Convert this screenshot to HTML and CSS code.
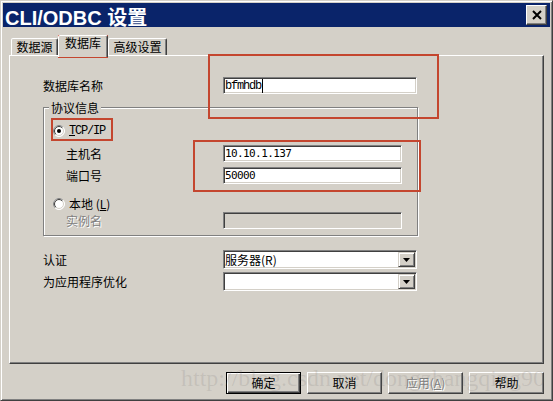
FILE: index.html
```html
<!DOCTYPE html>
<html lang="zh">
<head>
<meta charset="utf-8">
<title>CLI/ODBC 设置</title>
<link rel="stylesheet" href="styles.css">
</head>
<body>
<div class="window">
  <div class="titlebar">
    <span class="title">CLI/ODBC 设置</span>
    <span class="close"><svg width="10" height="10" viewBox="0 0 10 10"><path d="M1 1L9 9M9 1L1 9" stroke="#000" stroke-width="2"/></svg></span>
  </div>
  <div class="client">
    <div class="tabs">
      <div class="tab t1">数据源</div>
      <div class="tab t2 active">数据库</div>
      <div class="tab t3">高级设置</div>
    </div>
    <div class="panel">
      <div class="row">
        <span class="lbl">数据库名称</span>
        <div class="field"><span class="mono caret">bfmhdb</span></div>
      </div>
      <fieldset class="group">
        <legend>协议信息</legend>
        <div class="grow r-tcp">
          <span class="opt"><svg class="radio" width="12" height="12" viewBox="0 0 12 12"><circle cx="6" cy="6" r="5.5" fill="#fff" stroke="#fff"/><path d="M2.1 9.9A5.5 5.5 0 0 1 9.9 2.1" fill="none" stroke="#808080"/><circle cx="6" cy="6" r="4.5" fill="#fff" stroke="#d4d0c8"/><path d="M2.8 9.2A4.5 4.5 0 0 1 9.2 2.8" fill="none" stroke="#404040"/><circle cx="6" cy="6" r="2" fill="#000"/></svg><span class="mono"><u>T</u>CP/IP</span></span>
        </div>
        <div class="grow r-host">
          <span class="sub">主机名</span>
          <div class="field"><span class="num">10.10.1.137</span></div>
        </div>
        <div class="grow r-port">
          <span class="sub">端口号</span>
          <div class="field"><span class="num">50000</span></div>
        </div>
        <div class="grow r-local">
          <span class="opt"><svg class="radio" width="12" height="12" viewBox="0 0 12 12"><circle cx="6" cy="6" r="5.5" fill="#fff" stroke="#fff"/><path d="M2.1 9.9A5.5 5.5 0 0 1 9.9 2.1" fill="none" stroke="#808080"/><circle cx="6" cy="6" r="4.5" fill="#fff" stroke="#d4d0c8"/><path d="M2.8 9.2A4.5 4.5 0 0 1 9.2 2.8" fill="none" stroke="#404040"/></svg><span>本地 (<u>L</u>)</span></span>
        </div>
        <div class="grow r-inst">
          <span class="sub disabled">实例名</span>
          <div class="field off"></div>
        </div>
      </fieldset>
      <div class="row combo-row r-auth">
        <span class="lbl">认证</span>
        <div class="combo"><span class="ctext">服务器(R)</span><span class="cbtn"><svg width="7" height="4" viewBox="0 0 7 4"><path d="M0 0H7L3.5 4Z" fill="#000"/></svg></span></div>
      </div>
      <div class="row combo-row r-opt">
        <span class="lbl">为应用程序优化</span>
        <div class="combo"><span class="ctext"></span><span class="cbtn"><svg width="7" height="4" viewBox="0 0 7 4"><path d="M0 0H7L3.5 4Z" fill="#000"/></svg></span></div>
      </div>
    </div>
    <div class="buttons">
      <div class="btn default"><span class="btn-in">确定</span></div>
      <div class="btn">取消</div>
      <div class="btn"><span class="disabled">应用(<u>A</u>)</span></div>
      <div class="btn">帮助</div>
    </div>
  </div>
  <div class="anno anno-tab"></div>
  <div class="anno anno-db"></div>
  <div class="anno anno-tcp"></div>
  <div class="anno anno-net"></div>
  <div class="watermark">http://blog.csdn.net/dongzhangqing90</div>
</div>
</body>
</html>
```

FILE: styles.css
```css
* { box-sizing: border-box; }
html, body { margin: 0; padding: 0; background: #d4d0c8; }
body {
  font-family: "Noto Sans CJK SC", "Liberation Sans", sans-serif;
  font-size: 12px;
  color: #000;
}
.window {
  position: relative;
  width: 553px;
  height: 401px;
  background: #d4d0c8;
  border: 1px solid;
  border-color: #d4d0c8 #404040 #404040 #d4d0c8;
  box-shadow: inset 1px 1px 0 #fff, inset -1px -1px 0 #808080;
  padding: 2px;
  overflow: hidden;
}
.titlebar {
  height: 24px;
  background: #0a246a;
  display: flex;
  justify-content: space-between;
  align-items: flex-start;
}
.title {
  color: #fff;
  font-family: "Liberation Sans", "Noto Sans CJK SC", sans-serif;
  font-weight: bold;
  font-size: 20px;
  line-height: 20px;
  padding: 5px 0 0 2px;
  white-space: nowrap;
}
.close {
  margin: 2px 3px 0 0;
  width: 21px;
  height: 20px;
  background: #d4d0c8;
  border: 1px solid;
  border-color: #fff #404040 #404040 #fff;
  box-shadow: inset -1px -1px 0 #808080;
  display: flex;
  align-items: center;
  justify-content: center;
}
.client { padding: 0 6px; }
.tabs {
  position: relative;
  z-index: 1;
  display: flex;
  align-items: flex-end;
  height: 20px;
  margin-top: 8px;
  padding-left: 2px;
}
.tab {
  height: 17px;
  border: 1px solid;
  border-bottom: none;
  border-color: #fff #404040 transparent #fff;
  border-radius: 2px 2px 0 0;
  box-shadow: inset -1px 0 0 #808080;
  background: #d4d0c8;
  text-align: center;
  line-height: 14px;
  padding-top: 1px;
  white-space: nowrap;
}
.t1 { width: 47px; }
.t2 { width: 50px; }
.t3 { width: 59px; }
.tab.active {
  height: 22px;
  margin-bottom: -2px;
  padding-top: 0;
}
.panel {
  width: 535px;
  height: 309px;
  border: 1px solid;
  border-color: #fff #404040 #404040 #fff;
  box-shadow: inset -1px -1px 0 #808080;
  padding: 21px 0 0 33px;
}
.row {
  display: grid;
  grid-template-columns: 180px 194px;
  height: 17px;
  align-items: center;
}
.lbl, .sub { white-space: nowrap; line-height: 14px; }
.field {
  height: 17px;
  background: #fff;
  border: 1px solid;
  border-color: #808080 #fff #fff #808080;
  box-shadow: inset 1px 1px 0 #404040, inset -1px -1px 0 #d4d0c8;
  padding-left: 1px;
  display: flex;
  align-items: center;
  overflow: hidden;
}
.field.off { background: #d4d0c8; }
.mono {
  font-family: "Liberation Mono", monospace;
  font-size: 12px;
  letter-spacing: -1.2px;
  line-height: 14px;
}
.caret {
  border-right: 1px solid #000;
  padding-right: 1px;
  height: 14px;
}
.num {
  font-family: "DejaVu Sans Mono", monospace;
  font-size: 11px;
  letter-spacing: -0.6px;
  line-height: 14px;
}
.group {
  margin: 7px 0 0 0;
  width: 375px;
  min-width: 0;
  padding: 0 0 6px 5px;
  border: 1px solid #808080;
  box-shadow: inset 1px 1px 0 #fff, 1px 1px 0 #fff;
}
.group legend {
  padding: 0 2px;
  font-size: 12px;
  line-height: 13px;
  background: #d4d0c8;
}
.grow {
  display: grid;
  grid-template-columns: 174px 179px;
  height: 17px;
  align-items: center;
}
.r-tcp { margin-top: 8px; }
.r-host { margin-top: 6px; }
.r-port { margin-top: 5px; }
.r-local { margin-top: 11px; }
.opt {
  grid-column: 1 / 3;
  display: flex;
  align-items: center;
  gap: 4px;
  padding-left: 4px;
  white-space: nowrap;
}
.radio { display: block; flex: none; }
.sub { padding-left: 17px; }
.disabled {
  color: #808080;
  text-shadow: 1px 1px 0 #fff;
}
.r-auth { margin-top: 14px; height: 19px; }
.r-opt { margin-top: 3px; height: 19px; }
.combo {
  height: 19px;
  background: #fff;
  border: 1px solid;
  border-color: #808080 #fff #fff #808080;
  box-shadow: inset 1px 1px 0 #404040, inset -1px -1px 0 #d4d0c8;
  padding: 1px;
  display: flex;
}
.ctext {
  flex: 1;
  line-height: 15px;
  white-space: nowrap;
}
.cbtn {
  width: 17px;
  height: 15px;
  background: #d4d0c8;
  border: 1px solid;
  border-color: #d4d0c8 #404040 #404040 #d4d0c8;
  box-shadow: inset 1px 1px 0 #fff, inset -1px -1px 0 #808080;
  display: flex;
  align-items: center;
  justify-content: center;
}
.cbtn svg { display: block; }
.buttons {
  display: flex;
  justify-content: flex-end;
  gap: 6px;
  margin-top: 8px;
}
.btn {
  width: 75px;
  height: 22px;
  border: 1px solid;
  border-color: #fff #404040 #404040 #fff;
  box-shadow: inset -1px -1px 0 #808080;
  text-align: center;
  line-height: 20px;
  white-space: nowrap;
}
.btn.default {
  border: 1px solid #000;
  box-shadow: inset 1px 1px 0 #fff, inset -1px -1px 0 #404040, inset -2px -2px 0 #808080;
}
.anno {
  position: absolute;
  border: 2px solid #c4462f;
  pointer-events: none;
}
.anno-tab { left: 57px; top: 34px; width: 50px; height: 23px; }
.anno-db { left: 207px; top: 53px; width: 231px; height: 65px; }
.anno-tcp { left: 50px; top: 117px; width: 62px; height: 23px; }
.anno-net { left: 192px; top: 139px; width: 228px; height: 52px; }
.watermark {
  position: absolute;
  left: 180px;
  top: 365px;
  font-family: "Liberation Serif", serif;
  font-size: 24px;
  line-height: 24px;
  color: rgba(110, 110, 110, 0.16);
  white-space: nowrap;
  pointer-events: none;
}
```
